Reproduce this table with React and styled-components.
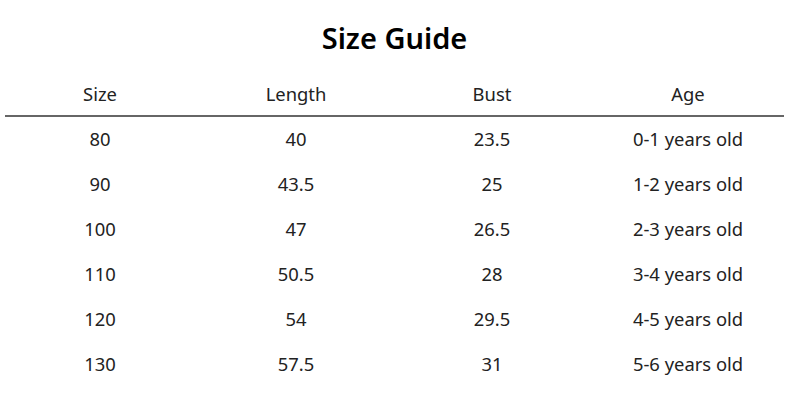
import React from 'react'
import styled, { createGlobalStyle } from 'styled-components'

const GlobalStyle = createGlobalStyle`
  html, body {
    margin: 0;
    padding: 0;
    background: #fff;
  }
  body {
    font-family: "Noto Sans", "Open Sans", sans-serif;
    color: #222;
  }
`

const rows = [
  ['80', '40', '23.5', '0-1 years old'],
  ['90', '43.5', '25', '1-2 years old'],
  ['100', '47', '26.5', '2-3 years old'],
  ['110', '50.5', '28', '3-4 years old'],
  ['120', '54', '29.5', '4-5 years old'],
  ['130', '57.5', '31', '5-6 years old'],
]

const SizeGuide = () => (
  <Page>
    <Title>Size Guide</Title>
    <HeadRow>
      <Cell>Size</Cell>
      <Cell>Length</Cell>
      <Cell>Bust</Cell>
      <Cell>Age</Cell>
    </HeadRow>
    <Divider />
    {rows.map((r) => (
      <Row key={r[0]}>
        {r.map((v, i) => <Cell key={i}>{v}</Cell>)}
      </Row>
    ))}
  </Page>
)

const Page = styled.div`
  width: 789px;
  height: 400px;
  overflow: hidden;
`

const Title = styled.h1`
  margin: 0;
  padding-top: 18px;
  height: 40px;
  line-height: 40px;
  text-align: center;
  font-size: 29px;
  font-weight: 600;
  color: #000;
`

const Row = styled.div`
  display: grid;
  grid-template-columns: repeat(4, 196px);
  margin-left: 2px;
  height: 45px;
  align-items: center;
`

const HeadRow = styled(Row)`
  height: auto;
  padding: 24px 0 9px;
  line-height: 24px;
`

const Cell = styled.div`
  text-align: center;
  font-size: 18.4px;
`

const Divider = styled.div`
  height: 2px;
  margin: 0 5px -1px;
  background: #666;
`

const App = () => (
  <>
    <GlobalStyle />
    <SizeGuide />
  </>
)

export default App
